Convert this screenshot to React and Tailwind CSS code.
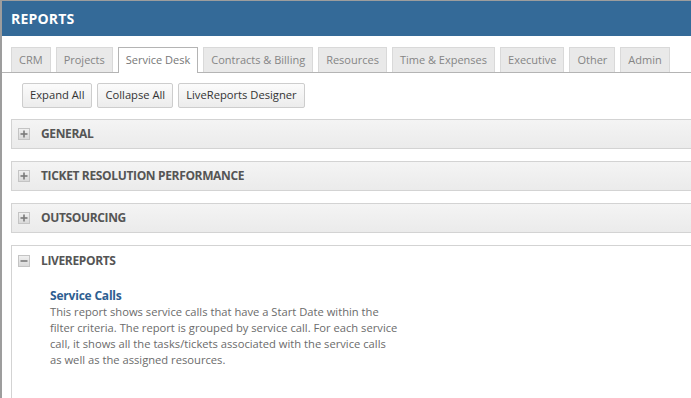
import React from "react";

const tabs = [
  "CRM",
  "Projects",
  "Service Desk",
  "Contracts & Billing",
  "Resources",
  "Time & Expenses",
  "Executive",
  "Other",
  "Admin",
];

const sections = ["GENERAL", "TICKET RESOLUTION PERFORMANCE", "OUTSOURCING"];

const Toggle = ({ open }) => (
  <span className="flex items-center justify-center w-[12px] h-[12px] border border-[#c4c4c4] bg-gradient-to-b from-[#f0f0f0] to-[#d9d9d9] shrink-0">
    <svg width="8" height="8" viewBox="0 0 8 8">
      <rect x="0.5" y="3.2" width="7" height="1.6" fill="#7a7a7a" />
      {!open && <rect x="3.2" y="0.5" width="1.6" height="7" fill="#7a7a7a" />}
    </svg>
  </span>
);

const App = () => {
  return (
    <div
      className="w-[691px] h-[398px] overflow-hidden bg-white border-t border-l-2 border-[#9d9d9d]"
      style={{ fontFamily: '"Open Sans", "Noto Sans", sans-serif' }}
    >
      {/* Header */}
      <div className="h-[35px] bg-[#346a98] flex items-center pl-[9px] text-white font-bold text-[14px] tracking-[0.2px]">
        REPORTS
      </div>

      {/* Tabs */}
      <div className="mt-[11px] flex gap-[5px] pl-[9px] border-b border-[#b4b4b4] h-[26px] whitespace-nowrap">
        {tabs.map((t) =>
          t === "Service Desk" ? (
            <div
              key={t}
              className="h-[26px] px-[7px] flex items-center bg-white border border-b-0 border-[#b4b4b4] text-[11px] text-[#777] -mb-px relative"
            >
              {t}
            </div>
          ) : (
            <div
              key={t}
              className="h-[25px] px-[7px] flex items-center bg-[#e9e9e9] border border-b-0 border-[#d9d9d9] text-[11px] text-[#858585]"
            >
              {t}
            </div>
          )
        )}
      </div>

      {/* Buttons */}
      <div className="flex gap-[5px] pl-[20px] mt-[10px] whitespace-nowrap">
        {["Expand All", "Collapse All", "LiveReports Designer"].map((b) => (
          <button
            key={b}
            className="h-[25px] px-[7px] border border-[#cdcdcd] rounded-[2px] bg-gradient-to-b from-[#fbfbfb] to-[#ececec] text-[11.2px] text-[#333]"
          >
            {b}
          </button>
        ))}
      </div>

      {/* Sections */}
      <div className="ml-[9px] mt-[11px] flex flex-col gap-[12px]">
        {sections.map((s) => (
          <div
            key={s}
            className="h-[30px] flex items-center gap-[11px] pl-[6px] border border-r-0 border-[#d3d3d3] bg-gradient-to-b from-[#f4f4f4] to-[#ebebeb]"
          >
            <Toggle />
            <span className="text-[12px] font-bold text-[#555] tracking-[-0.35px]">{s}</span>
          </div>
        ))}

        <div className="border border-r-0 border-[#d3d3d3] h-[160px]">
          <div className="h-[30px] flex items-center gap-[11px] pl-[6px]">
            <Toggle open />
            <span className="text-[12px] font-bold text-[#555] tracking-[-0.35px]">LIVEREPORTS</span>
          </div>
          <div className="pl-[38px] pt-[12px]">
            <div className="text-[12px] font-bold text-[#2d5e91] leading-[16px] tracking-[-0.2px]">Service Calls</div>
            <p className="text-[11.2px] text-[#6b6b6b] leading-[16px]">
              This report shows service calls that have a Start Date within the
              <br />
              filter criteria. The report is grouped by service call. For each service
              <br />
              call, it shows all the tasks/tickets associated with the service calls
              <br />
              as well as the assigned resources.
            </p>
          </div>
        </div>
      </div>
    </div>
  );
};

export default App;
